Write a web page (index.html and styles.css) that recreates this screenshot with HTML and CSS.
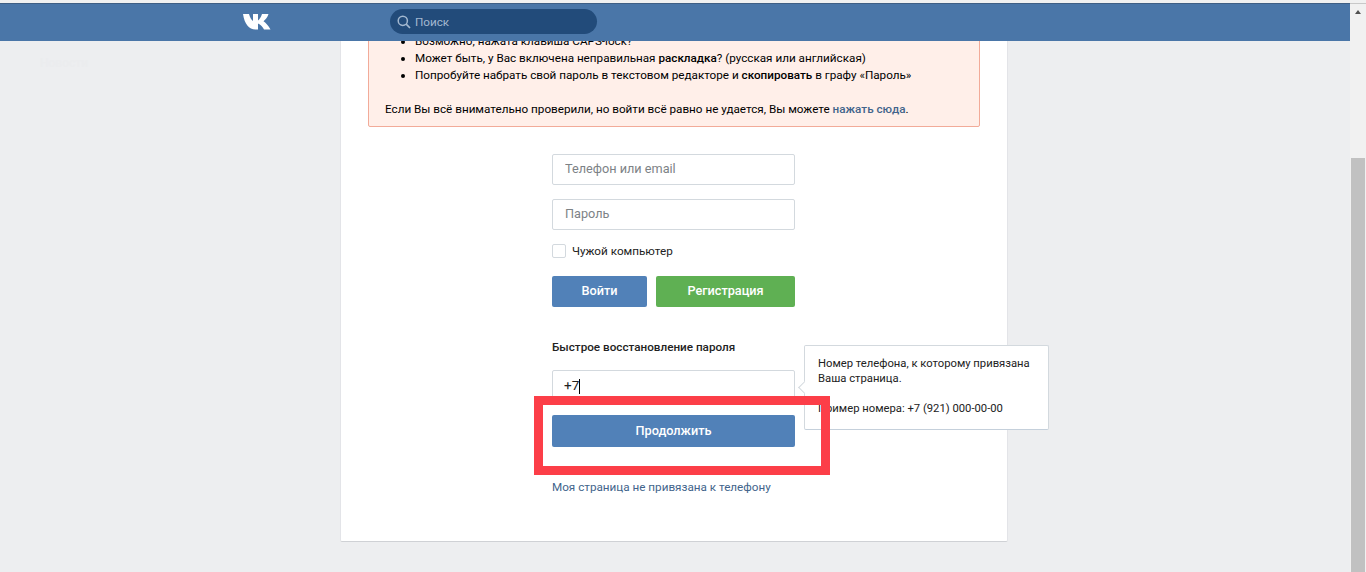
FILE: index.html
```html
<!DOCTYPE html>
<html>
<head>
    <meta charset="utf-8">
    <title>ВКонтакте</title>
    <link rel="stylesheet" href="styles.css">
</head>
<body>
    <div class="topline"></div>
    <div class="window">
        <div class="viewport">
            <header class="header">
                <svg class="logo" viewBox="0 0 28 17" width="28" height="17">
                    <path fill="#fff" d="M0 1H6C7 4.5 8.5 7 10 8V1H15V7.5C16.5 6.5 18 4 19 1H25.5C24.5 4.5 22 7 20.5 8.2C22.5 9.5 25.5 12.5 27.5 16.5H21C20 14 17.5 11.5 15 10.5V16.5H12.5C6 16.5 1.5 11 0 1Z"/>
                </svg>
                <div class="search">
                    <svg class="search-icon" viewBox="0 0 14 14" width="14" height="14">
                        <circle cx="5.8" cy="5.8" r="4.6" fill="none" stroke="#a3b8d0" stroke-width="1.5"/>
                        <path d="M9.2 9.2L13 13" stroke="#a3b8d0" stroke-width="1.7"/>
                    </svg>
                    <span>Поиск</span>
                </div>
            </header>

            <main class="content">
                <nav class="side">
                    <div class="side-item">Новости</div>
                </nav>

                <section class="card">
                    <div class="alert">
                        <ul>
                            <li>Возможно, нажата клавиша CAPS-lock?</li>
                            <li>Может быть, у Вас включена неправильная <b>раскладка</b>? (русская или английская)</li>
                            <li>Попробуйте набрать свой пароль в текстовом редакторе и <b>скопировать</b> в графу «Пароль»</li>
                        </ul>
                        <p>Если Вы всё внимательно проверили, но войти всё равно не удается, Вы можете <a href="#">нажать сюда</a>.</p>
                    </div>

                    <div class="form">
                        <input class="field" type="text" placeholder="Телефон или email">
                        <input class="field" type="password" placeholder="Пароль">
                        <div class="check-row">
                            <span class="check"></span>
                            <span>Чужой компьютер</span>
                        </div>
                        <div class="btn-row">
                            <button class="btn btn-login">Войти</button>
                            <button class="btn btn-green">Регистрация</button>
                        </div>

                        <h4 class="restore-title">Быстрое восстановление пароля</h4>
                        <div class="phone-wrap">
                            <div class="field phone">+7<span class="caret"></span></div>
                            <div class="tip">
                                <p>Номер телефона, к которому привязана Ваша страница.</p>
                                <p>Пример номера: +7 (921) 000-00-00</p>
                            </div>
                        </div>
                        <div class="continue-wrap">
                            <button class="btn btn-wide">Продолжить</button>
                            <div class="mark"></div>
                        </div>
                        <a class="no-phone" href="#">Моя страница не привязана к телефону</a>
                    </div>
                </section>
            </main>
        </div>

        <div class="scrollbar">
            <div class="arrow"></div>
            <div class="thumb"></div>
        </div>
    </div>
</body>
</html>
```

FILE: styles.css
```css
* {
    box-sizing: border-box;
}
html, body {
    height: 100%;
}
body {
    margin: 0;
    overflow: hidden;
    background: #edeef0;
    color: #000;
    font-family: Roboto, "Liberation Sans", sans-serif;
    font-size: 11.7px;
    display: flex;
    flex-direction: column;
}
.topline {
    height: 3px;
    background: #f1f1f1;
    flex: none;
}
.window {
    flex: 1;
    display: flex;
    min-height: 0;
}
.viewport {
    flex: 1;
    display: flex;
    flex-direction: column;
    min-width: 0;
}

/* header */
.header {
    position: relative;
    z-index: 2;
    height: 38px;
    flex: none;
    background: #4a76a8;
    border-top: 1px solid #3f5f85;
    display: flex;
    align-items: center;
    padding-left: 243px;
}
.logo {
    flex: none;
    margin-top: -2px;
}
.search {
    width: 207px;
    height: 25px;
    margin-left: 119px;
    margin-top: -2px;
    padding-left: 7px;
    border-radius: 13px;
    background: #224b7a;
    color: #a3b8d0;
    display: flex;
    align-items: center;
    gap: 4px;
}

/* page */
.content {
    flex: 1;
    display: flex;
    min-height: 0;
}
.side {
    width: 340px;
    flex: none;
    padding: 15px 0 0 40px;
}
.side-item {
    color: #ebecee;
    font-size: 12px;
    font-weight: 500;
}
.card {
    width: 668px;
    height: 501px;
    flex: none;
    background: #fff;
    border: 1px solid #e3e4e8;
    border-top: 0;
    border-bottom-color: #cfd1d5;
    border-radius: 0 0 2px 2px;
}

/* error box */
.alert {
    margin: -30px 27px 0 27px;
    padding: 21px 16px 10px 16px;
    height: 116px;
    background: #ffefe9;
    border: 1px solid #f2ab99;
    border-radius: 2px;
    line-height: 17px;
}
.alert ul {
    margin: 0;
    padding-left: 30px;
}
.alert p {
    margin: 17px 0 0;
}
.alert a {
    color: #42648b;
    font-weight: 500;
    text-decoration: none;
}
.alert b {
    font-weight: 500;
}

/* login form */
.form {
    width: 243px;
    margin: 27px 0 0 211px;
}
.field {
    display: block;
    width: 100%;
    height: 31px;
    margin-bottom: 14px;
    padding: 0 12px 2px;
    border: 1px solid #d3d9de;
    border-radius: 2px;
    background: #fff;
    font-family: inherit;
    font-size: 12.7px;
    outline: none;
}
.field::placeholder {
    color: #7d8286;
    opacity: 1;
}
.check-row {
    display: flex;
    align-items: center;
    gap: 6px;
    height: 14px;
    color: #222;
}
.check {
    width: 14px;
    height: 14px;
    border: 1px solid #d3d9de;
    border-radius: 2px;
}
.btn-row {
    display: flex;
    gap: 9px;
    margin-top: 18px;
}
.btn {
    height: 31px;
    border: 0;
    border-radius: 2px;
    background: #5181b8;
    color: #fff;
    font-family: inherit;
    font-size: 12.7px;
    font-weight: 500;
    padding: 0 0 2px;
}
.btn-login {
    width: 95px;
}
.btn-green {
    width: 139px;
    background: #5fb053;
}
.restore-title {
    margin: 32px 0 0;
    height: 17px;
    line-height: 17px;
    font-size: 11.7px;
    font-weight: 500;
    color: #222;
}
.phone-wrap {
    position: relative;
    margin-top: 14px;
}
.phone {
    height: 31px;
    margin-bottom: 14px;
    padding: 0 0 0 11px;
    font-size: 13.5px;
    line-height: 28px;
    color: #222;
}
.caret {
    display: inline-block;
    width: 1px;
    height: 15px;
    background: #000;
    vertical-align: middle;
}
.tip {
    position: absolute;
    left: 252px;
    top: -25px;
    width: 245px;
    height: 85px;
    padding: 10px 13px;
    background: #fff;
    border: 1px solid #d3d9de;
    border-bottom-color: #c5d0db;
    border-radius: 2px;
    line-height: 15px;
    font-size: 11.25px;
    color: #222;
}
.tip::before {
    content: "";
    position: absolute;
    left: -5px;
    top: 37px;
    width: 8px;
    height: 8px;
    background: #fff;
    border-left: 1px solid #d3d9de;
    border-bottom: 1px solid #d3d9de;
    transform: rotate(45deg);
}
.tip p {
    margin: 0 0 15px;
}
.continue-wrap {
    position: relative;
}
.btn-wide {
    display: block;
    width: 100%;
    height: 32px;
}
.mark {
    position: absolute;
    left: -18px;
    top: -19px;
    width: 296px;
    height: 79px;
    border: 9px solid #fc3e48;
}
.no-phone {
    display: block;
    margin-top: 32px;
    color: #42648b;
    font-size: 11.7px;
    line-height: 16px;
    text-decoration: none;
}

/* browser scrollbar */
.scrollbar {
    width: 16px;
    flex: none;
    position: relative;
    background: #f1f1f1;
    border-top: 1px solid #c8c8c8;
}
.arrow {
    position: absolute;
    left: 5px;
    top: 6px;
    width: 0;
    height: 0;
    border-left: 3.5px solid transparent;
    border-right: 3.5px solid transparent;
    border-bottom: 4px solid #505050;
}
.thumb {
    position: absolute;
    left: 1px;
    right: 1px;
    top: 154px;
    bottom: 0;
    background: #c1c1c1;
}
```
